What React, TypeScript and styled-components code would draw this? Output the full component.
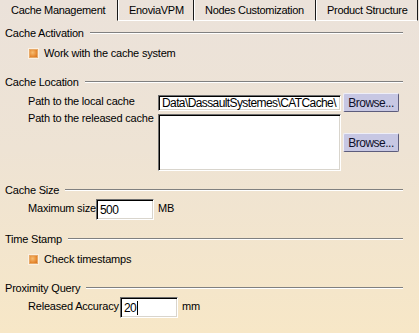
import React from "react";
import styled, { createGlobalStyle } from "styled-components";

const GlobalStyle = createGlobalStyle`
  html, body {
    margin: 0;
    padding: 0;
  }
  body {
    font-family: "Liberation Sans", Arial, sans-serif;
  }
`;

const Panel = styled.div`
  width: 419px;
  height: 333px;
  overflow: hidden;
  background: linear-gradient(180deg, #ebe2da 0%, #eee3d4 45%, #f7e7c7 100%);
  color: #000;
  font-size: 11px;
  letter-spacing: -0.2px;
`;

const TabBar = styled.div`
  display: flex;
  height: 21px;
`;

const Tab = styled.div<{ $active?: boolean; $width: number }>`
  box-sizing: border-box;
  display: flex;
  align-items: center;
  width: ${(p) => p.$width}px;
  height: 21px;
  padding: 0 0 1px 10px;
  white-space: nowrap;
  letter-spacing: -0.3px;
  border-left: 1px solid ${(p) => (p.$active ? "transparent" : "#fff")};
  border-right: 1px solid #1a1a1a;
  border-bottom: 1px solid ${(p) => (p.$active ? "transparent" : "#fff")};
`;

const Content = styled.div`
  padding-top: 4px;
`;

const Section = styled.section<{ $gap: number }>`
  margin-bottom: ${(p) => p.$gap}px;
`;

const SectionHead = styled.div`
  display: flex;
  align-items: center;
  height: 16px;
  padding: 0 16px 0 5px;
  white-space: nowrap;
`;

const HeadRule = styled.div`
  flex: 1;
  margin: 0 0 0 6px;
  border-top: 1px solid #808080;
  border-bottom: 1px solid #fff;
`;

const Body = styled.div`
  padding-left: 28px;
`;

const Row = styled.div<{ $top: number; $height?: number }>`
  display: flex;
  align-items: center;
  margin-top: ${(p) => p.$top}px;
  height: ${(p) => (p.$height ? `${p.$height}px` : "auto")};
  white-space: nowrap;
`;

const CheckBox = styled.span`
  box-sizing: border-box;
  width: 11px;
  height: 11px;
  margin-right: 5px;
  border: 1px solid #fbf0e2;
  box-shadow: inset 0 0 0 1px #e7a968;
  background: radial-gradient(circle at 40% 40%, #f7bd72 0%, #e5872f 55%, #c45f1b 100%);
`;

const Label = styled.span<{ $width: number; $top?: boolean }>`
  width: ${(p) => p.$width}px;
  flex: none;
  align-self: ${(p) => (p.$top ? "flex-start" : "center")};
  line-height: 14px;
  margin-top: -3px;
`;

const Field = styled.div<{ $width: number; $height: number }>`
  box-sizing: border-box;
  display: flex;
  align-items: center;
  width: ${(p) => p.$width}px;
  height: ${(p) => p.$height}px;
  padding-left: 3px;
  overflow: hidden;
  white-space: nowrap;
  background: #fff;
  border: 1px solid;
  border-color: #6e6e6e #ffffff #ffffff #6e6e6e;
  box-shadow: inset 1px 1px 0 #000, inset -1px -1px 0 #d9d5cd;
  font-size: 12px;
  letter-spacing: -0.6px;
`;

const Caret = styled.span`
  display: inline-block;
  width: 1px;
  height: 14px;
  margin-left: 1px;
  background: #000;
`;

const BrowseButton = styled.div`
  box-sizing: border-box;
  display: flex;
  align-items: center;
  justify-content: center;
  width: 56px;
  height: 19px;
  margin-left: 2px;
  background: #c7c7e3;
  border: 1px solid;
  border-color: #eeeef8 #5c5c7c #5c5c7c #eeeef8;
  border-radius: 2px;
  font-size: 12px;
  letter-spacing: -0.5px;
  color: #10102a;
`;

const Unit = styled.span`
  margin-left: 4px;
  margin-top: -3px;
`;

const App = (): JSX.Element => {
  return (
    <Panel>
      <GlobalStyle />
      <TabBar>
        <Tab $active $width={118}>Cache Management</Tab>
        <Tab $width={76}>EnoviaVPM</Tab>
        <Tab $width={122}>Nodes Customization</Tab>
        <Tab $width={102}>Product Structure</Tab>
      </TabBar>
      <Content>
        <Section $gap={13}>
          <SectionHead>
            Cache Activation
            <HeadRule />
          </SectionHead>
          <Body>
            <Row $top={4} $height={16}>
              <CheckBox />
              Work with the cache system
            </Row>
          </Body>
        </Section>

        <Section $gap={11}>
          <SectionHead>
            Cache Location
            <HeadRule />
          </SectionHead>
          <Body>
            <Row $top={3} $height={19}>
              <Label $width={130}>Path to the local cache</Label>
              <Field $width={183} $height={16}>
                Data\DassaultSystemes\CATCache\
              </Field>
              <BrowseButton>Browse...</BrowseButton>
            </Row>
            <Row $top={2}>
              <Label $width={130} $top>
                Path to the released cache
              </Label>
              <Field $width={183} $height={57} />
              <BrowseButton>Browse...</BrowseButton>
            </Row>
          </Body>
        </Section>

        <Section $gap={11}>
          <SectionHead>
            Cache Size
            <HeadRule />
          </SectionHead>
          <Body>
            <Row $top={1} $height={21}>
              <Label $width={68}>Maximum size</Label>
              <Field $width={58} $height={21}>
                500
              </Field>
              <Unit>MB</Unit>
            </Row>
          </Body>
        </Section>

        <Section $gap={13}>
          <SectionHead>
            Time Stamp
            <HeadRule />
          </SectionHead>
          <Body>
            <Row $top={4} $height={16}>
              <CheckBox />
              Check timestamps
            </Row>
          </Body>
        </Section>

        <Section $gap={0}>
          <SectionHead>
            Proximity Query
            <HeadRule />
          </SectionHead>
          <Body>
            <Row $top={1} $height={21}>
              <Label $width={92}>Released Accuracy</Label>
              <Field $width={58} $height={21}>
                20
                <Caret />
              </Field>
              <Unit>mm</Unit>
            </Row>
          </Body>
        </Section>
      </Content>
    </Panel>
  );
};

export default App;
